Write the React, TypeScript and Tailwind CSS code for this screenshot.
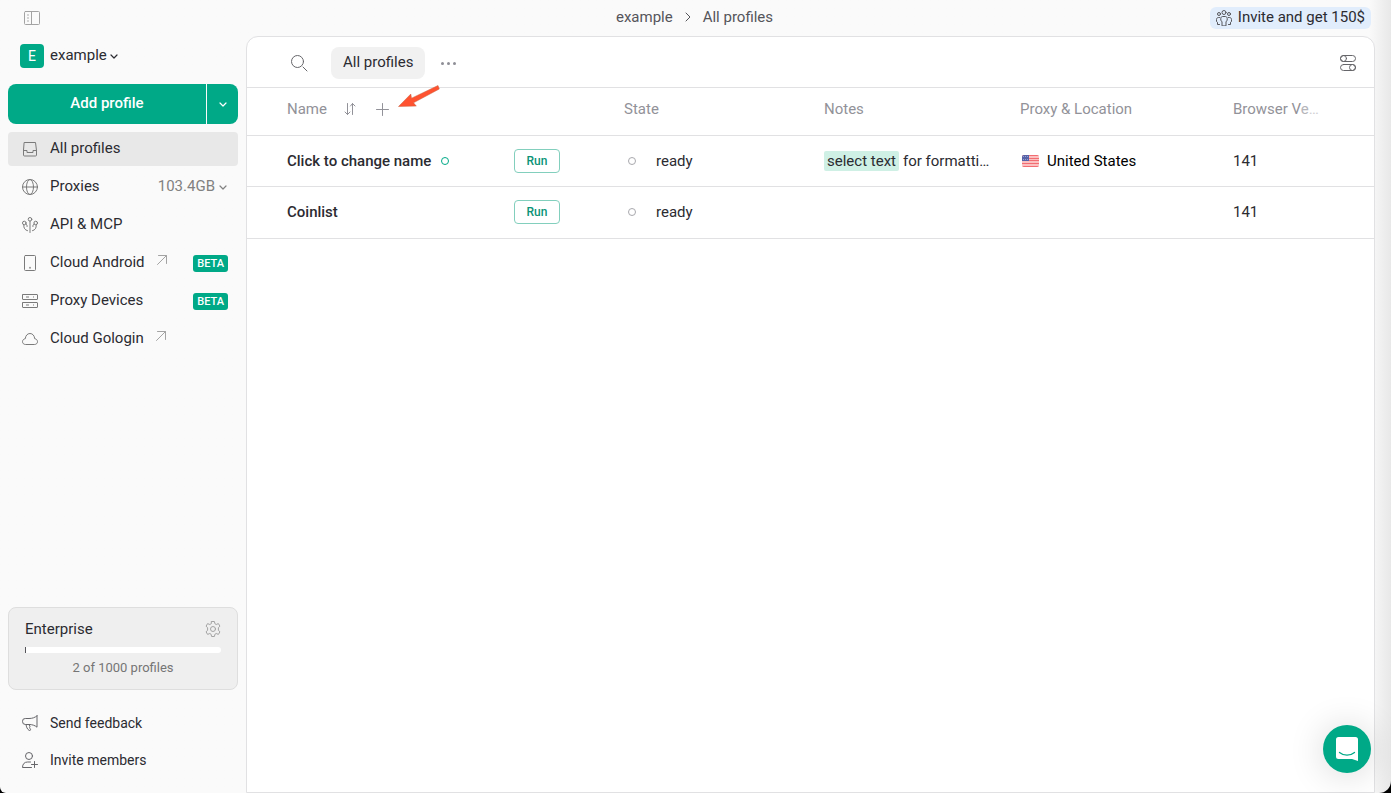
import React from 'react';
import clsx from 'clsx';

interface IconProps {
  className?: string;
}

interface SvgProps extends IconProps {
  size?: number;
  children: React.ReactNode;
}

const Svg: React.FC<SvgProps> = ({ size = 16, className, children }) => (
  <svg
    viewBox={`0 0 ${size} ${size}`}
    width={size}
    height={size}
    fill="none"
    stroke="currentColor"
    strokeLinecap="round"
    strokeLinejoin="round"
    className={clsx('shrink-0', className)}
    aria-hidden="true"
  >
    {children}
  </svg>
);

const SidebarIcon = () => (
  <Svg className="text-[#a3a3a3]">
    <rect x="0.5" y="1.5" width="15" height="13" rx="1" />
    <path d="M7.5 1.5v13" />
    <path d="M3 5h2M3 8h2M3 11h2" strokeWidth="1.5" strokeLinecap="butt" stroke="#c8c8c8" />
  </Svg>
);

const ChevronDown: React.FC<IconProps> = ({ className }) => (
  <Svg size={10} className={className}>
    <path d="M2 4l3 3 3-3" strokeWidth="1.2" />
  </Svg>
);

const InboxIcon = () => (
  <Svg>
    <path d="M2.500 1.500h11l1 8v4.500a1 1 0 0 1-1 1h-11a1 1 0 0 1-1-1V9.500z" />
    <path d="M1.500 9.500h3.500v2h6v-2h3.500" />
  </Svg>
);

const GlobeIcon = () => (
  <Svg>
    <circle cx="8" cy="8" r="7.5" />
    <ellipse cx="8" cy="8" rx="3.5" ry="7.5" />
    <path d="M.5 8h15" />
  </Svg>
);

const ApiIcon = () => (
  <Svg>
    <circle cx="8" cy="2.300" r="1.800" />
    <circle cx="2.300" cy="6" r="1.800" />
    <circle cx="13.700" cy="6" r="1.800" />
    <path d="M8 4.200v11.300M1.800 8c-.3 3 1 5 3.700 5.700M14.200 8c.3 3-1 5-3.700 5.700M3.900 7c1 .5 1.300 1.300 1.200 2.500M12.100 7c-1 .5-1.300 1.300-1.200 2.500" />
  </Svg>
);

const TabletIcon = () => (
  <Svg>
    <rect x="2.5" y="0.5" width="11" height="15" rx="1" />
    <path d="M8 12.5v.5" strokeWidth="1.5" />
  </Svg>
);

const ServerIcon = () => (
  <Svg>
    <rect x="0.5" y="1.5" width="15" height="5" rx="0.5" />
    <rect x="0.5" y="9.5" width="15" height="5" rx="0.5" />
    <path d="M4 4h3M11 4h1M4 12h3M11 12h1" strokeLinecap="butt" />
  </Svg>
);

const CloudIcon = () => (
  <Svg>
    <path d="M3.300 13.500C1.600 13.500.5 12.200.5 10.700c0-1.600 1.200-2.800 2.800-3C3.500 4.800 5.300 2.500 8 2.500s4.500 2.300 4.700 5.200c1.600.2 2.800 1.400 2.800 3 0 1.500-1.100 2.800-2.800 2.800z" />
  </Svg>
);

const MegaphoneIcon = () => (
  <Svg>
    <path d="M15 .8v11.400c-2-1.700-4.500-2.700-8-2.700H3.500a3 3 0 0 1-3-3.200A2.700 2.700 0 0 1 3.300 3.500H7c3.500 0 6-1 8-2.700z" />
    <path d="M4 9.500c.3 2.500 1.300 4.700 3 5.800.8.500 2 0 1.500-1-.8-1.300-1.300-1.800-.5-2.500l-1-2.300" />
  </Svg>
);

const UserPlusIcon = () => (
  <Svg>
    <circle cx="7" cy="4" r="3.5" />
    <path d="M9.500 15.500h-9c0-3.500 2-5.500 5-5.500h3M12.500 9.500v6M9.500 12.500h6" />
  </Svg>
);

const GearIcon = () => (
  <Svg className="text-[#a3a3a3]">
    <circle cx="8" cy="8" r="2.5" />
    <path d="M6.600.5h2.800l.5 2.200 1.300.8 2.200-.9 1.500 2.500-1.500 1.700v2.400l1.500 1.700-1.500 2.500-2.200-.9-1.300.8-.5 2.200H6.600l-.5-2.200-1.300-.8-2.200.9-1.500-2.500 1.500-1.700V6.800L1.100 5.100l1.500-2.500 2.200.9 1.300-.8z" />
  </Svg>
);

const TeamIcon = () => (
  <Svg className="text-[#55555a]">
    <circle cx="8" cy="2.5" r="2" />
    <circle cx="3" cy="4" r="1.5" />
    <circle cx="13" cy="4" r="1.5" />
    <path d="M6 15.500v-4l-1.200-1V8.300c0-1 .8-1.800 1.800-1.800h2.800c1 0 1.800.8 1.800 1.800v2.200l-1.200 1v4zM3.500 7.500h-1c-1.200 0-2 .8-2 2v2l1 .8v2.200h2M12.500 7.500h1c1.200 0 2 .8 2 2v2l-1 .8v2.200h-2" />
  </Svg>
);

const SearchIcon = () => (
  <Svg size={17} className="text-[#66666a]">
    <circle cx="6.5" cy="6.5" r="6" />
    <path d="M12 12l4 4" />
  </Svg>
);

const TogglesIcon = () => (
  <Svg className="text-[#66666a]">
    <rect x="0.5" y="0.5" width="15" height="6" rx="3" />
    <circle cx="3.5" cy="3.5" r="3" />
    <rect x="0.5" y="9.5" width="15" height="6" rx="3" />
    <circle cx="12.5" cy="12.5" r="3" />
  </Svg>
);

const ExternalArrow = () => (
  <Svg size={10} className="mb-1.5 text-[#a3a3a3]">
    <path d="M.5 9.500l9-9M1.500.5h8v8" />
  </Svg>
);

const SortIcon = () => (
  <Svg size={12}>
    <path d="M3.500.5v11M1 9l2.500 2.500L6 9M8.500 11.500V.5M6.500 3l2-2.500L11 3" />
  </Svg>
);

const PlusIcon = () => (
  <Svg size={13}>
    <path d="M6.500.5v12M.5 6.500h12" />
  </Svg>
);

const UsFlag = () => (
  <svg viewBox="0 0 17 12" width="17" height="12" className="shrink-0 rounded-xs" aria-hidden="true">
    <rect width="17" height="12" fill="#fbc0c0" />
    <path d="M0 .5h17M0 3.500h17M0 5.500h17M0 8.500h17M0 11.500h17" stroke="#f26d72" strokeWidth="1" />
    <rect width="7" height="6" fill="#5763a8" />
    <path d="M1 1.500h5M1 4.500h5" stroke="#9aa3d0" strokeDasharray="1 1" />
  </svg>
);

interface NavItem {
  label: string;
  icon: React.ReactNode;
  active?: boolean;
  external?: boolean;
  beta?: boolean;
  traffic?: string;
}

const navItems: NavItem[] = [
  { label: 'All profiles', icon: <InboxIcon />, active: true },
  { label: 'Proxies', icon: <GlobeIcon />, traffic: '103.4GB' },
  { label: 'API & MCP', icon: <ApiIcon /> },
  { label: 'Cloud Android', icon: <TabletIcon />, external: true, beta: true },
  { label: 'Proxy Devices', icon: <ServerIcon />, beta: true },
  { label: 'Cloud Gologin', icon: <CloudIcon />, external: true },
];

const NavLink: React.FC<{ item: NavItem }> = ({ item }) => (
  <a
    href="#"
    className={clsx(
      'flex h-[34px] items-center rounded pr-[10px] pl-[14px]',
      item.active && 'bg-[#e8e8e8]'
    )}
  >
    <span className="mr-3 text-[#7a7a7a]">{item.icon}</span>
    <span className="pb-0.5">{item.label}</span>
    {item.external && (
      <span className="ml-3">
        <ExternalArrow />
      </span>
    )}
    {item.traffic && (
      <span className="ml-auto flex items-center gap-[3px] text-[#818181]">
        <span className="pb-0.5">{item.traffic}</span>
        <ChevronDown />
      </span>
    )}
    {item.beta && (
      <span className="ml-auto rounded-[3px] bg-[#00a987] px-1 text-[11px] leading-[17px] font-medium text-white">
        BETA
      </span>
    )}
  </a>
);

const Sidebar = () => (
  <aside className="flex w-[246px] shrink-0 flex-col px-2 pb-[15px]">
    <button type="button" aria-label="Toggle sidebar" className="mt-[10px] ml-4 self-start">
      <SidebarIcon />
    </button>

    <button type="button" className="mt-[18px] ml-3 flex items-center self-start">
      <span className="flex size-6 items-center justify-center rounded bg-[#00a987] text-sm text-white">
        E
      </span>
      <span className="mr-0.5 ml-1.5 pb-0.5">example</span>
      <ChevronDown />
    </button>

    {/* Split button */}
    <div className="mt-4 flex h-10 gap-px overflow-hidden rounded-lg text-white">
      <button type="button" className="flex-1 bg-[#00a987] pb-0.5 font-medium">
        Add profile
      </button>
      <button
        type="button"
        aria-label="More ways to add a profile"
        className="flex w-[31px] items-center justify-center bg-[#00a987]"
      >
        <ChevronDown />
      </button>
    </div>

    <nav className="mt-2 flex flex-col gap-1">
      {navItems.map((item) => (
        <NavLink key={item.label} item={item} />
      ))}
    </nav>

    {/* Plan usage */}
    <section className="mt-auto mb-[14px] rounded-lg border border-[#dedede] bg-[#efefef] px-4 pt-[11px] pb-3">
      <div className="flex items-center justify-between">
        <h2>Enterprise</h2>
        <button type="button" aria-label="Plan settings">
          <GearIcon />
        </button>
      </div>
      <div className="mt-2 h-1.5 overflow-hidden rounded-r-sm bg-white">
        <div className="h-full w-px bg-[#55555a]" />
      </div>
      <p className="mt-1.5 text-center text-[13px] leading-[18px] text-[#757575]">2 of 1000 profiles</p>
    </section>

    <a href="#" className="flex h-[37px] items-center gap-3 pl-[14px] text-sm">
      <span className="text-[#66666a]">
        <MegaphoneIcon />
      </span>
      Send feedback
    </a>
    <a href="#" className="flex h-[37px] items-center gap-3 pl-[14px] text-sm">
      <span className="text-[#66666a]">
        <UserPlusIcon />
      </span>
      Invite members
    </a>
  </aside>
);

const TopBar = () => (
  <header className="flex h-9 shrink-0 items-center">
    <div className="flex-1" />
    <nav aria-label="Breadcrumb" className="-ml-[228px] flex items-center gap-2.5 pb-0.5 text-[#55555a]">
      <a href="#">example</a>
      <Svg size={10}>
        <path d="M3 1l4 4-4 4" />
      </Svg>
      <a href="#">All profiles</a>
    </nav>
    <div className="flex flex-1 justify-end pr-1">
      <a href="#" className="flex h-[22px] items-center gap-1.5 rounded-md bg-[#e1edfc] px-1.5">
        <TeamIcon />
        <span className="pb-0.5">Invite and get 150$</span>
      </a>
    </div>
  </header>
);

const Toolbar = () => (
  <div className="flex h-[51px] shrink-0 items-center border-b border-[#e1e1e3] pt-0.5 pr-[18px] pl-11">
    <button type="button" aria-label="Search" className="mr-[23px]">
      <SearchIcon />
    </button>
    <button type="button" className="h-8 rounded-lg bg-[#f1f1f1] px-3 pb-0.5">
      All profiles
    </button>
    <button type="button" aria-label="More folders" className="ml-4 flex h-8 items-center gap-[3px]">
      <span className="size-[3px] rounded-full bg-[#8e8e96]" />
      <span className="size-[3px] rounded-full bg-[#8e8e96]" />
      <span className="size-[3px] rounded-full bg-[#8e8e96]" />
    </button>
    <button type="button" aria-label="Table settings" className="ml-auto">
      <TogglesIcon />
    </button>
  </div>
);

interface Profile {
  name: string;
  isNew?: boolean;
  notes?: React.ReactNode;
  location?: string;
  version: string;
}

const profiles: Profile[] = [
  {
    name: 'Click to change name',
    isNew: true,
    notes: (
      <>
        <mark className="mr-1 rounded-xs bg-[#cff0e5] px-[3px] py-px text-inherit">select text</mark>
        for formatti…
      </>
    ),
    location: 'United States',
    version: '141',
  },
  { name: 'Coinlist', version: '141' },
];

const ProfilesTable = () => (
  <table className="w-full table-fixed text-left">
    <colgroup>
      <col className="w-[267px]" />
      <col className="w-[110px]" />
      <col className="w-[200px]" />
      <col className="w-[196px]" />
      <col className="w-[213px]" />
      <col />
    </colgroup>
    <thead className="text-[#929299]">
      <tr className="h-[47px] border-b border-[#e1e1e3] *:pb-1 *:font-normal">
        <th className="pl-10" colSpan={2}>
          {/* relative wrapper holds the pointer arrow */}
          <div className="relative flex items-center">
            Name
            <button type="button" aria-label="Sort by name" className="ml-[17px]">
              <SortIcon />
            </button>
            <button type="button" aria-label="Add column" className="ml-5">
              <PlusIcon />
            </button>
            <svg
              viewBox="0 0 42 24"
              width="42"
              height="24"
              className="absolute -top-[14px] left-[111px]"
              aria-hidden="true"
            >
              <path
                d="M40 .5L13.500 13.200 12.800 9 .5 21.500l17.800-.4-2.800-3.300L41.300 4z"
                fill="#ff5230"
                stroke="#c8603f"
                strokeWidth="0.5"
              />
            </svg>
          </div>
        </th>
        <th>State</th>
        <th>Notes</th>
        <th>Proxy &amp; Location</th>
        <th className="whitespace-nowrap">
          Browser V<span className="text-[#b5b5ba]">e</span>
          <span className="text-[#cfcfd3]">…</span>
        </th>
      </tr>
    </thead>
    <tbody>
      {profiles.map((profile) => (
        <tr key={profile.name} className="h-[51px] border-b border-[#e1e1e3] last:h-[52px]">
          <td className="pl-10 font-medium whitespace-nowrap">
            <div className="flex items-center gap-2.5">
              {profile.name}
              {profile.isNew && <span className="size-2 rounded-full border border-[#00a987]" />}
            </div>
          </td>
          <td>
            <button
              type="button"
              className="block h-6 w-[46px] rounded border border-[#82cfbd] text-xs font-medium text-[#0b9376]"
            >
              Run
            </button>
          </td>
          <td>
            <div className="flex items-center gap-5 pl-1">
              <span className="size-2 rounded-full border border-[#a8a8ad]" />
              ready
            </div>
          </td>
          <td className="truncate">{profile.notes}</td>
          <td className="text-black">
            {profile.location && (
              <div className="flex items-center gap-2 pl-0.5">
                <UsFlag />
                {profile.location}
              </div>
            )}
          </td>
          <td>{profile.version}</td>
        </tr>
      ))}
    </tbody>
  </table>
);

const ChatButton = () => (
  <button
    type="button"
    aria-label="Open chat"
    className="fixed right-5 bottom-5 flex size-12 items-center justify-center rounded-full bg-[#00a987] shadow-[0_2px_36px_rgba(0,0,0,0.16)]"
  >
    <svg viewBox="0 0 22 24" width="22" height="24" aria-hidden="true">
      <path d="M2.500 0h17A2.500 2.500 0 0 1 22 2.500V24l-6-2H2.500A2.500 2.500 0 0 1 0 19.500v-17A2.500 2.500 0 0 1 2.500 0z" fill="#fff" />
      <path d="M3.500 15.500c4.500 3.600 10.500 3.600 15 0" fill="none" stroke="#00a987" strokeWidth="1.3" strokeLinecap="round" />
    </svg>
  </button>
);

const App: React.FC = () => {
  return (
    <div className="bg-black font-['Roboto',sans-serif] text-[15px] leading-5 text-[#2b2b31]">
      <div className="flex min-h-screen overflow-hidden rounded-br-xl rounded-bl-md bg-linear-to-l from-[#e8e8e8] to-[#fafafa] to-[22px]">
        <Sidebar />
        <div className="flex min-w-0 flex-1 flex-col pr-4">
          <TopBar />
          <main className="flex flex-1 flex-col rounded-t-xl border border-[#e1e1e3] bg-white">
            <Toolbar />
            <ProfilesTable />
          </main>
        </div>
      </div>
      <ChatButton />
    </div>
  );
};

export default App;
